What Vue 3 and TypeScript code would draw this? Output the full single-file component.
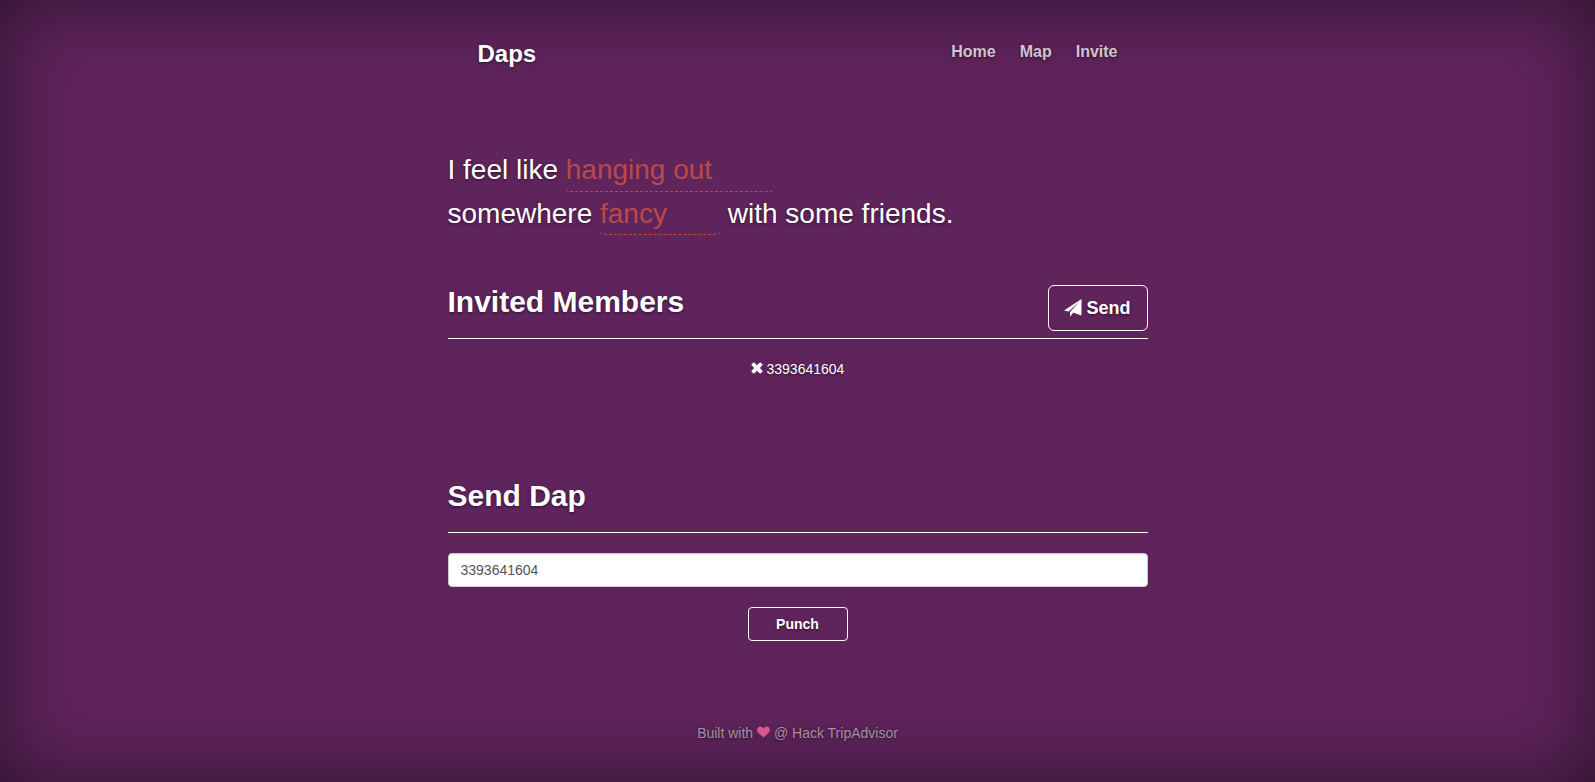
<script setup lang="ts">
import { ref } from 'vue'

const activity = ref('hanging out')
const place = ref('fancy')
const phone = ref('3393641604')
const members = ref<string[]>(['3393641604'])
const links = ['Home', 'Map', 'Invite']

function remove(index: number) {
  members.value.splice(index, 1)
}
function punch() {
  if (phone.value) members.value.push(phone.value)
}
</script>

<template>
  <div class="site">
    <div class="cover">
      <header class="masthead">
        <h3 class="brand">Daps</h3>
        <nav class="nav">
          <a v-for="link in links" :key="link" href="#">{{ link }}</a>
        </nav>
      </header>

      <main>
        <p class="sentence">
          I feel like <input v-model="activity" class="blank activity" aria-label="Activity" /><br />
          somewhere <input v-model="place" class="blank place" aria-label="Kind of place" />
          with some friends.
        </p>

        <section class="members">
          <div class="heading">
            <h2>Invited Members</h2>
            <button type="button" class="btn send">
              <svg viewBox="0 0 18 18" width="18" height="18" aria-hidden="true">
                <path d="M17.6 0L0 11.4L4.8 12.6L15.4 2.6L6 13.2V17.8L9.2 13.8L8.4 13.2L17.4 16.4Z" fill="currentColor" />
              </svg>
              <span>Send</span>
            </button>
          </div>
          <ul>
            <li v-for="(member, i) in members" :key="i">
              <button type="button" class="remove" :aria-label="`Remove ${member}`" @click="remove(i)">
                <svg viewBox="0 0 12 12" width="12" height="12" aria-hidden="true">
                  <path d="M2.8 0.2L6 3.2L9.2 0.2L11.8 2.8L8.8 6L11.8 9.2L9.2 11.8L6 8.8L2.8 11.8L0.2 9.2L3.2 6L0.2 2.8Z" fill="currentColor" />
                </svg>
              </button>
              {{ member }}
            </li>
          </ul>
        </section>

        <form @submit.prevent="punch">
          <div class="heading">
            <h2><label for="phone">Send Dap</label></h2>
          </div>
          <input id="phone" v-model="phone" class="field" type="tel" />
          <button type="submit" class="btn punch">Punch</button>
        </form>
      </main>

      <footer>
        Built with
        <svg viewBox="0 0 14 12" width="13" height="12" aria-hidden="true">
          <path d="M7 12L1.4 6.8C-1.2 4 0.6 0 3.6 0C5.2 0 6.4 1 7 2.4C7.6 1 8.8 0 10.4 0C13.4 0 15.2 4 12.6 6.8Z" fill="#d65a90" />
        </svg>
        @ Hack TripAdvisor
      </footer>
    </div>
  </div>
</template>

<style>
body {
  background: #5f245c;
}
</style>

<style scoped>
.site,
.site * {
  box-sizing: border-box;
}
.site {
  min-height: 100vh;
  padding: 0 20px;
  color: #fff;
  background: #5f245c;
  box-shadow: inset 0 0 80px rgba(0, 0, 0, 0.5);
  font: 14px/20px "Liberation Sans", Arial, sans-serif;
  text-shadow: 0 1px 3px rgba(0, 0, 0, 0.5);
}
.cover {
  max-width: 700px;
  margin: 0 auto;
}
.masthead {
  display: flex;
  justify-content: space-between;
  padding: 40px 30px 0;
}
.brand {
  margin: 0;
  font-size: 24px;
  line-height: 28px;
}
.nav {
  display: flex;
  gap: 24px;
}
.nav a {
  color: rgba(255, 255, 255, 0.75);
  font-size: 16px;
  font-weight: 700;
  line-height: 23px;
  text-decoration: none;
}
.sentence {
  margin: 80px 0 0;
  font-size: 28px;
  line-height: 43px;
}
.blank {
  height: 43px;
  padding: 0;
  color: #b94a48;
  background: transparent;
  border: 0;
  border-bottom: 1px dashed #b94a48;
  border-radius: 4px;
  font: inherit;
  outline: 0;
}
.activity {
  width: 208px;
}
.place {
  width: 120px;
}
.members {
  min-height: 194px;
  margin-top: 50px;
}
.heading {
  display: flex;
  justify-content: space-between;
  align-items: flex-start;
  height: 54px;
  margin-bottom: 20px;
  border-bottom: 1px solid #fff;
}
h2 {
  margin: 0;
  font-size: 30px;
  line-height: 34px;
}
.btn {
  color: #fff;
  background: transparent;
  border: 1px solid #fff;
  font-family: inherit;
  font-weight: 700;
  text-shadow: inherit;
}
.send {
  display: flex;
  align-items: center;
  justify-content: center;
  gap: 4px;
  width: 100px;
  height: 46px;
  padding: 0;
  border-radius: 6px;
  font-size: 18px;
}
ul {
  margin: 0;
  padding: 0;
  list-style: none;
  text-align: center;
}
.remove {
  padding: 0;
  color: inherit;
  background: none;
  border: 0;
}
.field {
  display: block;
  width: 100%;
  height: 34px;
  padding: 6px 12px;
  color: #555;
  background: #fff;
  border: 1px solid #ccc;
  border-radius: 4px;
  box-shadow: inset 0 1px 1px rgba(0, 0, 0, 0.08);
  font: inherit;
}
.punch {
  display: block;
  width: 100px;
  height: 34px;
  margin: 20px auto 0;
  border-radius: 4px;
  font-size: 14px;
}
footer {
  margin-top: 82px;
  color: rgba(255, 255, 255, 0.5);
  text-align: center;
}
</style>
